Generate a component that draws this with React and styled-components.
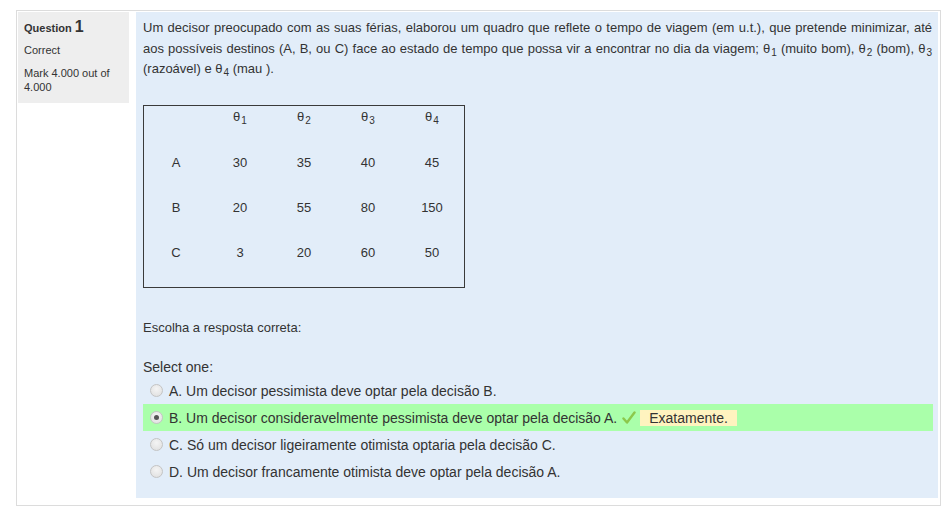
import styled, { createGlobalStyle } from "styled-components";

const GlobalStyle = createGlobalStyle`
  body {
    margin: 0;
    background: #ffffff;
    font-family: "Liberation Sans", Arial, sans-serif;
    color: #333333;
  }
`;

const headers = ["1", "2", "3", "4"];

const rows = [
  { label: "A", values: [30, 35, 40, 45] },
  { label: "B", values: [20, 55, 80, 150] },
  { label: "C", values: [3, 20, 60, 50] },
];

const options = [
  { id: "a", text: "A. Um decisor pessimista deve optar pela decisão B." },
  {
    id: "b",
    text: "B. Um decisor consideravelmente pessimista deve optar pela decisão A.",
    correct: true,
    feedback: "Exatamente.",
  },
  { id: "c", text: "C. Só um decisor ligeiramente otimista optaria pela decisão C." },
  { id: "d", text: "D. Um decisor francamente otimista deve optar pela decisão A." },
];

function Theta({ n }) {
  return (
    <>
      θ<Sub>{n}</Sub>
    </>
  );
}

function CheckIcon() {
  return (
    <svg width="14" height="14" viewBox="0 0 14 14">
      <path
        d="M1.5 7.5 L5 11.5 L12.5 1.5"
        fill="none"
        stroke="#8cc84b"
        strokeWidth="2.4"
        strokeLinecap="round"
        strokeLinejoin="round"
      />
    </svg>
  );
}

export default function App() {
  return (
    <>
      <GlobalStyle />
      <Que>
        <Info>
          <Title>
            Question <Num>1</Num>
          </Title>
          <State>Correct</State>
          <Grade>Mark 4.000 out of 4.000</Grade>
        </Info>

        <Content>
          <QText>
            Um decisor preocupado com as suas férias, elaborou um quadro que
            reflete o tempo de viagem (em u.t.), que pretende minimizar, até aos
            possíveis destinos (A, B, ou C) face ao estado de tempo que possa
            vir a encontrar no dia da viagem; <Theta n="1" /> (muito bom),{" "}
            <Theta n="2" /> (bom), <Theta n="3" /> (razoável) e <Theta n="4" />{" "}
            (mau ).
          </QText>

          <Table>
            <Cell />
            {headers.map((h) => (
              <Cell key={h} $head>
                <Theta n={h} />
              </Cell>
            ))}
            {rows.map((r) => (
              <>
                <Cell key={r.label}>{r.label}</Cell>
                {r.values.map((v, i) => (
                  <Cell key={r.label + i}>{v}</Cell>
                ))}
              </>
            ))}
          </Table>

          <Prompt>Escolha a resposta correta:</Prompt>

          <SelectLabel>Select one:</SelectLabel>
          <Answers>
            {options.map((o) => (
              <Option key={o.id} $correct={o.correct}>
                <Radio $checked={o.correct} />
                <span>{o.text}</span>
                {o.correct && (
                  <>
                    <Tick>
                      <CheckIcon />
                    </Tick>
                    <Feedback>{o.feedback}</Feedback>
                  </>
                )}
              </Option>
            ))}
          </Answers>
        </Content>
      </Que>
    </>
  );
}

const Que = styled.div`
  box-sizing: border-box;
  margin: 10px 0 0 16px;
  width: 925px;
  height: 496px;
  border: 1px solid #dcdcdc;
  padding: 1px;
  display: flex;
  align-items: flex-start;
  gap: 7px;
`;

const Info = styled.div`
  box-sizing: border-box;
  flex: 0 0 111px;
  height: 91px;
  padding: 5px 6px 0;
  background: #eeeeee;
  font-size: 11px;
  color: #333333;
`;

const Title = styled.div`
  font-weight: bold;
  line-height: 20px;
`;

const Num = styled.span`
  font-size: 16px;
`;

const State = styled.div`
  margin-top: 5px;
  line-height: 14.7px;
`;

const Grade = styled.div`
  margin-top: 8px;
  line-height: 14.7px;
  padding-right: 10px;
`;

const Content = styled.div`
  box-sizing: border-box;
  flex: 0 0 802px;
  height: 486px;
  padding: 6px 5px 0 7px;
  background: #e2edf9;
`;

const QText = styled.div`
  font-size: 13px;
  line-height: 20.5px;
  text-align: justify;
  color: #333333;
  padding-right: 1px;
`;

const Sub = styled.span`
  display: inline-block;
  font-size: 10px;
  line-height: 10px;
  vertical-align: -3px;
  margin-left: 1px;
`;

const Table = styled.div`
  margin-top: 25px;
  width: 320px;
  border: 1px solid #3a3a3a;
  padding-bottom: 1px;
  display: grid;
  grid-template-columns: repeat(5, 64px);
  grid-auto-rows: 45px;
`;

const Cell = styled.div`
  padding-top: ${(p) => (p.$head ? "3px" : "4px")};
  font-size: 13px;
  line-height: 15px;
  text-align: center;
  color: #333333;
`;

const Prompt = styled.div`
  margin-top: 30px;
  font-size: 13px;
  line-height: 20.5px;
`;

const SelectLabel = styled.div`
  margin-top: 19px;
  font-size: 14px;
  line-height: 20px;
`;

const Answers = styled.div`
  display: flex;
  flex-direction: column;
`;

const Option = styled.div`
  display: flex;
  align-items: center;
  height: 27px;
  padding-left: 7px;
  font-size: 14px;
  color: #333333;
  background: ${(p) => (p.$correct ? "#aaffaa" : "transparent")};
`;

const Radio = styled.span`
  position: relative;
  box-sizing: border-box;
  flex: 0 0 13px;
  height: 13px;
  margin-right: 6px;
  border-radius: 50%;
  border: 1px solid #c4c4c4;
  background: radial-gradient(circle at 50% 35%, #f4f4f4 0%, #dedede 100%);

  &::after {
    content: "";
    display: ${(p) => (p.$checked ? "block" : "none")};
    position: absolute;
    left: 3px;
    top: 3px;
    width: 5px;
    height: 5px;
    border-radius: 50%;
    background: #555555;
  }
`;

const Tick = styled.span`
  display: inline-flex;
  margin: 0 4px 0 5px;
`;

const Feedback = styled.span`
  background: #fff3bf;
  padding: 0 9px;
  line-height: 16px;
`;
